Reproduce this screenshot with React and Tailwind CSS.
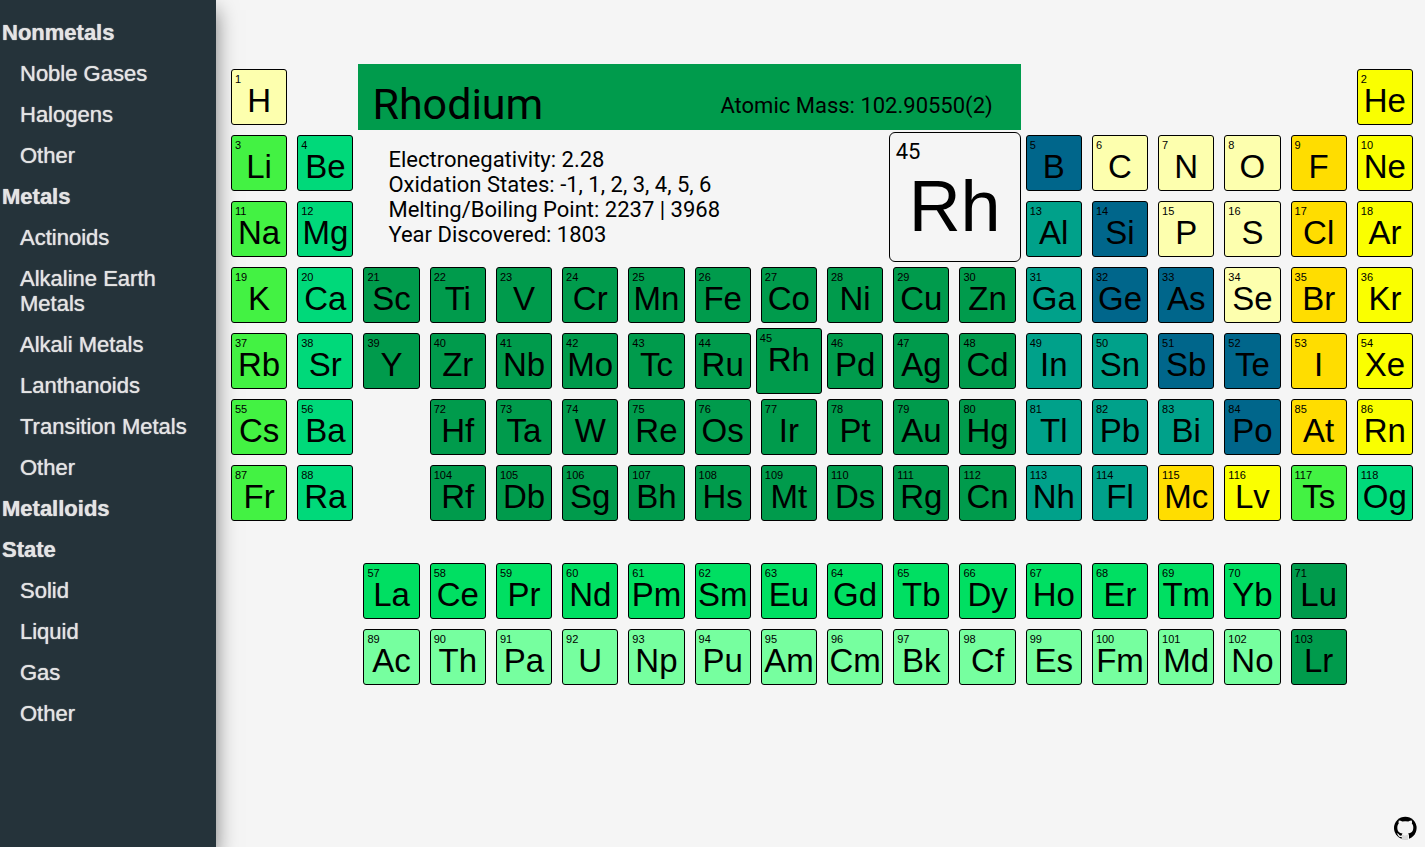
import React, { useState } from "react";

const sidebar = [
  { title: "Nonmetals", items: ["Noble Gases", "Halogens", "Other"] },
  {
    title: "Metals",
    items: ["Actinoids", "Alkaline Earth Metals", "Alkali Metals", "Lanthanoids", "Transition Metals", "Other"],
  },
  { title: "Metalloids", items: [] },
  { title: "State", items: ["Solid", "Liquid", "Gas", "Other"] },
];

const colors = {
  n: "bg-[#fdffae]",
  k: "bg-[#43f243]",
  e: "bg-[#00d97a]",
  t: "bg-[#009b4c]",
  p: "bg-[#00a18a]",
  m: "bg-[#00668b]",
  h: "bg-[#ffdd00]",
  g: "bg-[#faff00]",
  l: "bg-[#00df62]",
  a: "bg-[#76ff9f]",
};

// Each run: grid row, first column, first atomic number, "Symbol:category" entries.
const runs = [
  [1, 1, 1, "H:n"],
  [1, 18, 2, "He:g"],
  [2, 1, 3, "Li:k Be:e"],
  [2, 13, 5, "B:m C:n N:n O:n F:h Ne:g"],
  [3, 1, 11, "Na:k Mg:e"],
  [3, 13, 13, "Al:p Si:m P:n S:n Cl:h Ar:g"],
  [4, 1, 19, "K:k Ca:e Sc:t Ti:t V:t Cr:t Mn:t Fe:t Co:t Ni:t Cu:t Zn:t Ga:p Ge:m As:m Se:n Br:h Kr:g"],
  [5, 1, 37, "Rb:k Sr:e Y:t Zr:t Nb:t Mo:t Tc:t Ru:t Rh:t Pd:t Ag:t Cd:t In:p Sn:p Sb:m Te:m I:h Xe:g"],
  [6, 1, 55, "Cs:k Ba:e"],
  [6, 4, 72, "Hf:t Ta:t W:t Re:t Os:t Ir:t Pt:t Au:t Hg:t Tl:p Pb:p Bi:p Po:m At:h Rn:g"],
  [7, 1, 87, "Fr:k Ra:e"],
  [7, 4, 104, "Rf:t Db:t Sg:t Bh:t Hs:t Mt:t Ds:t Rg:t Cn:t Nh:p Fl:p Mc:h Lv:g Ts:k Og:e"],
  [9, 3, 57, "La:l Ce:l Pr:l Nd:l Pm:l Sm:l Eu:l Gd:l Tb:l Dy:l Ho:l Er:l Tm:l Yb:l Lu:t"],
  [10, 3, 89, "Ac:a Th:a Pa:a U:a Np:a Pu:a Am:a Cm:a Bk:a Cf:a Es:a Fm:a Md:a No:a Lr:t"],
];

const elements = runs.flatMap(([row, col, first, list]) =>
  list.split(" ").map((entry, i) => {
    const [symbol, kind] = entry.split(":");
    return { row, col: col + i, number: first + i, symbol, kind };
  })
);

function Element({ element, selected, onSelect }) {
  return (
    <button
      type="button"
      onClick={onSelect}
      aria-pressed={selected}
      style={{ gridRow: element.row, gridColumn: element.col }}
      className={`flex flex-col items-start rounded-[3px] border border-black ${colors[element.kind]} ${selected ? "-m-[5px]" : ""}`}
    >
      <span className="pl-[3px] pt-[3px] text-[11px] leading-[12px]">{element.number}</span>
      <span className="self-center text-[33px] leading-[32px]">{element.symbol}</span>
    </button>
  );
}

function Details() {
  return (
    <section className="col-start-3 col-end-13 row-start-1 row-end-4 -m-[5px] flex flex-col font-['Roboto',sans-serif] text-[22px] leading-[25px]">
      <header className="flex h-[66px] items-end justify-between bg-[#009b4c] pl-[14px] pr-7">
        <h1 className="text-[43px] leading-[52px]">Rhodium</h1>
        <p className="pb-3">Atomic Mass: 102.90550(2)</p>
      </header>
      <div className="flex flex-1 justify-between pt-[2px]">
        <div className="pl-[30px] pt-[15px]">
          <p>Electronegativity: 2.28</p>
          <p>Oxidation States: -1, 1, 2, 3, 4, 5, 6</p>
          <p>Melting/Boiling Point: 2237 | 3968</p>
          <p>Year Discovered: 1803</p>
        </div>
        <div className="flex w-[132px] flex-col rounded-[6px] border border-black">
          <span className="pl-[6px] pt-[6px]">45</span>
          <span className="self-center font-['Liberation_Sans',Arial,sans-serif] text-[72px] leading-[84px]">Rh</span>
        </div>
      </div>
    </section>
  );
}

function GithubMark() {
  return (
    <svg viewBox="0 0 24 24" className="size-6" aria-hidden="true">
      <circle cx="12.3" cy="12" r="11.3" />
      <path
        fill="#f5f5f5"
        d="M5.9 4.4c1.200 0 2.400.5 3.400 1.200a12 12 0 0 1 6 0c1-.7 2.200-1.200 3.400-1.200.5 1.200.4 2.300.1 3.100 1 1.100 1.500 2.300 1.500 3.900 0 4.200-2.300 5.600-5.200 6 .6.600.9 1.300.9 2.400v4H8.700v-2.800c-2.300.4-3.100-.6-3.700-1.800-.3-.7-.8-1.200-1.300-1.500.9-.4 1.800.1 2.400 1 .6.900 1.300 1.300 2.600.9.100-.9.300-1.600.8-2.200-2.900-.4-5.200-1.800-5.200-6 0-1.600.5-2.800 1.500-3.900-.3-.8-.4-1.900.1-3.100z"
      />
      <path d="M10 19v5M12 19.500v4.500M14 19v5" stroke="#bdbdbd" strokeWidth=".9" />
    </svg>
  );
}

export default function App() {
  const [selected, setSelected] = useState(45);
  return (
    <div className="flex min-h-screen bg-[#f5f5f5] font-['Liberation_Sans',Arial,sans-serif] text-black">
      <nav className="w-[216px] shrink-0 bg-[#25333a] pt-3 text-[22px] leading-[25px] text-[#e4e4e4] shadow-[0_10px_20px_rgba(0,0,0,0.5)] [text-shadow:0_0_1px_currentColor]">
        {sidebar.map((group) => (
          <div key={group.title}>
            <a href="#" className="block py-2 pl-[2px] font-bold">{group.title}</a>
            <ul>
              {group.items.map((item) => (
                <li key={item}>
                  <a href="#" className="block py-2 pl-5 pr-5">{item}</a>
                </li>
              ))}
            </ul>
          </div>
        ))}
      </nav>
      <main className="flex min-w-0 flex-1 flex-col justify-between pl-[15px] pr-3 pt-[69px]">
        <div className="grid grid-cols-[repeat(18,minmax(0,1fr))] grid-rows-[repeat(7,56px)_22px_repeat(2,56px)] gap-[10px]">
          {elements.map((el) => (
            <Element key={el.number} element={el} selected={el.number === selected} onSelect={() => setSelected(el.number)} />
          ))}
          <Details />
        </div>
        <a href="#" aria-label="GitHub" className="-mr-1 self-end pb-[7px]">
          <GithubMark />
        </a>
      </main>
    </div>
  );
}
